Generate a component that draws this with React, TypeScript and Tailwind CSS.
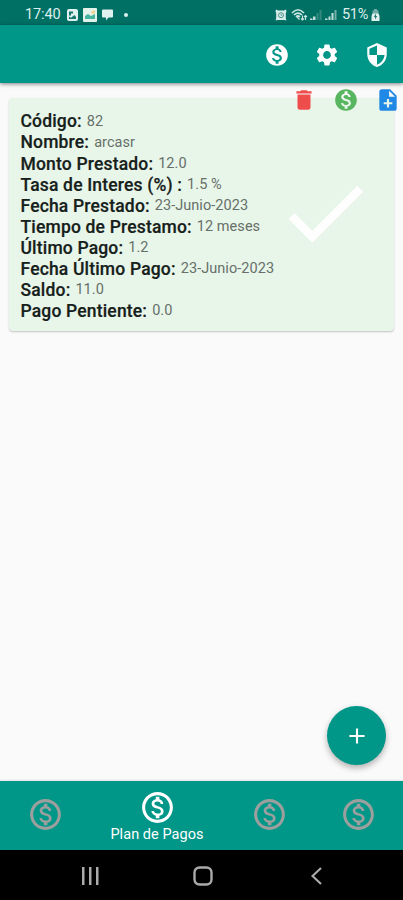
import type { ReactNode } from "react";
import {
  MdMonetizationOn,
  MdSettings,
  MdSecurity,
  MdDelete,
  MdNoteAdd,
  MdCheck,
  MdAdd,
  MdOutlineMonetizationOn,
} from "react-icons/md";

const rows: [string, string][] = [
  ["Código:", "82"],
  ["Nombre:", "arcasr"],
  ["Monto Prestado:", "12.0"],
  ["Tasa de Interes (%) :", "1.5 %"],
  ["Fecha Prestado:", "23-Junio-2023"],
  ["Tiempo de Prestamo:", "12 meses"],
  ["Último Pago:", "1.2"],
  ["Fecha Último Pago:", "23-Junio-2023"],
  ["Saldo:", "11.0"],
  ["Pago Pentiente:", "0.0"],
];

function StatusBar() {
  return (
    <div className="flex h-[25px] items-center bg-[#007064] pt-[5px] pl-[25px] text-[14.5px] leading-none text-[#dcefed]">
      <span className="w-[36px] whitespace-nowrap tracking-[-0.1px]">17:40</span>
      <svg className="ml-[6px]" width="11" height="12" viewBox="0 0 11 12">
        <rect width="11" height="12" rx="2" fill="#e0f1ef" />
        <path d="M2 2.5h4v2H4v2H2zM2 10V7.5l2 1.2L7.5 6 9 8v2z" fill="#16786d" />
      </svg>
      <svg className="ml-[5px]" width="14" height="14" viewBox="0 0 14 14">
        <rect width="14" height="14" rx="1" fill="#e3f3ec" />
        <path d="M2 11V8l3-2 3 2 4-2v5z" fill="#45b49e" />
        <path d="M8 4l4-2v3L9 6z" fill="#efd384" />
      </svg>
      <svg className="ml-[5px]" width="11" height="12" viewBox="0 0 11 12">
        <path d="M1 0.5h9q1 0 1 1v6q0 1-1 1H6.5L4 11.5v-3H1q-1 0-1-1v-6q0-1 1-1z" fill="#e0f1ef" />
      </svg>
      <span className="ml-[11px] size-[4px] rounded-full bg-[#dcefed]" />
      <div className="ml-auto flex items-center pr-[23px]">
        <svg width="12" height="12" viewBox="0 0 12 12">
          <path d="M1 .5l2 1h6l2-1 .5 2L10.800 4v5l.5 2.500-2-.5H2.700l-2 .5.5-2.500V4L.5 2.500z" fill="#d7edea" />
          <circle cx="6" cy="6.200" r="2.500" fill="none" stroke="#3d877e" strokeWidth=".9" />
          <path d="M6 4.800v1.500h1.200" fill="none" stroke="#3d877e" strokeWidth=".7" />
        </svg>
        <svg className="ml-[4px]" width="17" height="14" viewBox="0 0 17 14" fill="none" stroke="#cbe4e1">
          <path d="M1 5Q7-1.500 13 5M3 7q4-4 8 0M5 9q2-2 4 0" strokeWidth="1.700" />
          <path d="M6 9l2.500 2.500M11.500 7.500V12M10 10.500l1.500 1.500 1.500-1.500M14.500 12V7.500M13 9l1.500-1.500L16 9" strokeWidth="1.100" />
        </svg>
        <svg className="ml-[2px]" width="12" height="12" viewBox="0 0 12 12">
          <path d="M0 11V9.500h2.500V11zM3 11V7.500h2.500V11z" fill="#c0ddd9" />
          <path d="M6.500 11V4h2v7zM9.500 11V1h2v10z" fill="#36897f" />
        </svg>
        <svg className="ml-[3px]" width="12" height="12" viewBox="0 0 12 12">
          <path d="M0 11V9.500h2.500V11zM3.500 11V7.500h2V11zM6.500 11V4h2v7z" fill="#c0ddd9" />
          <path d="M9.500 11V1h2v10z" fill="#72aea7" />
        </svg>
        <span className="ml-[5px] w-[29px] whitespace-nowrap tracking-[-0.3px]">51%</span>
        <svg width="9" height="12" viewBox="0 0 9 12">
          <path d="M3 0h3v1.500h1.500V5h-6V1.500H3z" fill="#72aea7" />
          <path d="M1.500 4.500h6L8.500 7v5h-8V7z" fill="#e0f1ef" />
          <path d="M5 4.500L2.800 8H4v2.500L6.300 7H5z" fill="#27796f" />
        </svg>
      </div>
    </div>
  );
}

function AppBar() {
  return (
    <header className="relative z-10 flex h-[58px] items-center justify-end gap-[24px] bg-[#009688] pr-[13px] pt-px text-white shadow-[0_1px_4px_rgba(0,0,0,0.5)]">
      <MdMonetizationOn size={26} />
      <MdSettings size={26} />
      <MdSecurity size={26} />
    </header>
  );
}

function LoanCard() {
  return (
    <section className="relative mx-[9px] mt-[15px] h-[233px] rounded-[4px] bg-[#e8f5e9] pl-[11.500px] pt-[13px] shadow-[0_1px_2px_rgba(0,0,0,0.22)]">
      {rows.map(([label, value]) => (
        <div key={label} className="flex h-[21.05px] items-center whitespace-nowrap">
          <span className="text-[17.500px] font-medium tracking-[0.17px] text-[#16201a] [-webkit-text-stroke:0.2px_#16201a]">{label}</span>
          <span className="ml-[5px] text-[14.500px] tracking-[0.05px] text-[#667069]">{value}</span>
        </div>
      ))}
      <MdCheck size={102} className="absolute left-[265px] top-[64px] text-[#fdfefd]" />
      <div className="absolute left-[281.500px] top-[-11px] flex gap-[16px]">
        <MdDelete size={26} className="text-[#ef4d4b]" />
        <MdMonetizationOn size={26} className="text-[#58b560]" />
        <MdNoteAdd size={26} className="text-[#2088e5]" />
      </div>
    </section>
  );
}

function NavItem({ className, children }: { className: string; children: ReactNode }) {
  return <div className={`flex flex-col items-center ${className}`}>{children}</div>;
}

function BottomNav() {
  return (
    <nav className="flex h-[69px] bg-[#009688] text-[#9b9f9d] shadow-[0_-1px_2px_rgba(0,0,0,0.1)]">
      <NavItem className="w-[90px] pt-[15px]">
        <MdOutlineMonetizationOn size={37} />
      </NavItem>
      <NavItem className="w-[134px] pt-[8px] text-white">
        <MdOutlineMonetizationOn size={37} />
        <span className="text-[14.500px] leading-[18px] tracking-[0.05px] whitespace-nowrap">Plan de Pagos</span>
      </NavItem>
      <NavItem className="w-[90px] pt-[15px]">
        <MdOutlineMonetizationOn size={37} />
      </NavItem>
      <NavItem className="w-[89px] pt-[15px]">
        <MdOutlineMonetizationOn size={37} />
      </NavItem>
    </nav>
  );
}

function SystemNav() {
  return (
    <div className="flex h-[50px] items-center bg-black pl-[81px] pt-[2px] text-[#aaa]">
      <svg width="18" height="18" viewBox="0 0 18 18" stroke="currentColor" strokeWidth="2.500">
        <path d="M2.250 0v18M9.250 0v18M16.250 0v18" />
      </svg>
      <svg className="ml-[94px]" width="20" height="20" viewBox="0 0 20 20" fill="none" stroke="currentColor" strokeWidth="2.400">
        <rect x="1.500" y="1.500" width="17" height="17" rx="5" />
      </svg>
      <svg className="ml-[98px]" width="12" height="18" viewBox="0 0 12 18" fill="none" stroke="currentColor" strokeWidth="2.200">
        <path d="M10 1L1.500 9l8.500 8" />
      </svg>
    </div>
  );
}

export default function App() {
  return (
    <div className="flex h-[900px] w-[403px] flex-col overflow-hidden bg-[#fafafa] font-[Roboto,sans-serif]">
      <StatusBar />
      <AppBar />
      <main className="relative flex-1">
        <div className="flow-root">
          <LoanCard />
        </div>
        <button className="absolute right-[17px] bottom-[16px] flex size-[59px] items-center justify-center rounded-full bg-[#009688] text-white shadow-[0_3px_6px_rgba(0,0,0,0.3)]">
          <MdAdd size={26} />
        </button>
      </main>
      <BottomNav />
      <SystemNav />
    </div>
  );
}
